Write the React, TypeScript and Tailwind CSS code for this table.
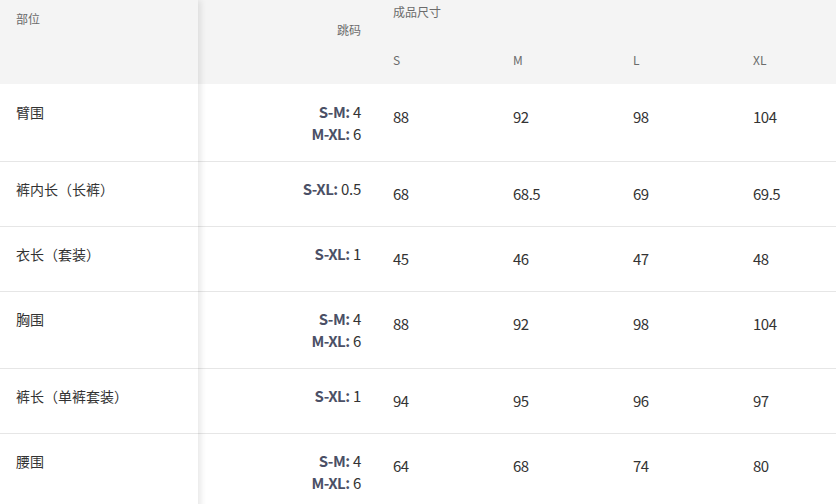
import React from "react";

type Row = { label: string; jump: [string, string][]; vals: string[] };

const rows: Row[] = [
  { label: "臂围", jump: [["S-M:", "4"], ["M-XL:", "6"]], vals: ["88", "92", "98", "104"] },
  { label: "裤内长（长裤）", jump: [["S-XL:", "0.5"]], vals: ["68", "68.5", "69", "69.5"] },
  { label: "衣长（套装）", jump: [["S-XL:", "1"]], vals: ["45", "46", "47", "48"] },
  { label: "胸围", jump: [["S-M:", "4"], ["M-XL:", "6"]], vals: ["88", "92", "98", "104"] },
  { label: "裤长（单裤套装）", jump: [["S-XL:", "1"]], vals: ["94", "95", "96", "97"] },
  { label: "腰围", jump: [["S-M:", "4"], ["M-XL:", "6"]], vals: ["64", "68", "74", "80"] },
];

const font = { fontFamily: '"Noto Sans CJK SC", "Noto Sans", sans-serif' };

function rowH(i: number, r: Row) {
  if (i === 0) return "h-[78px] pt-[17px]";
  return r.jump.length > 1 ? "h-[77px] pt-4" : "h-[65px] pt-4";
}

export default function App() {
  return (
    <div className="w-[836px] h-[504px] overflow-hidden bg-white" style={font}>
      <div className="flex w-[860px]">
        {/* sticky first column */}
        <div className="w-[198px] shrink-0 relative z-10 shadow-[3px_0_6px_rgba(0,0,0,0.09)] bg-white">
          <div className="h-[84px] bg-[#f4f4f4] pl-4 pt-[10px] text-[12px] leading-[18px] text-[#6b6b6b]">部位</div>
          {rows.map((r, i) => (
            <div
              key={i}
              className={`${rowH(i, r)} border-b border-[#e6e6e6] pl-4 text-[14px] leading-[22px] text-[#333]`}
            >
              {r.label}
            </div>
          ))}
        </div>
        <div className="flex-1">
          <div className="h-[84px] bg-[#f4f4f4] flex text-[12px] leading-[18px] text-[#6b6b6b]">
            <div className="w-[179px] shrink-0 pt-[21px] pr-4 text-right">跳码</div>
            <div className="flex-1 pt-[3px]">
              <div className="pl-4">成品尺寸</div>
              <div className="flex mt-[30px]">
                {["S", "M", "L", "XL"].map((s) => (
                  <div key={s} className="w-[120px] pl-4">{s}</div>
                ))}
              </div>
            </div>
          </div>
          {rows.map((r, i) => (
            <div key={i} className={`${rowH(i, r)} border-b border-[#e6e6e6] flex items-start`}>
              <div className="w-[179px] shrink-0 pr-4 text-right text-[15px] leading-[22px] text-[#333]">
                {r.jump.map(([k, v], j) => (
                  <div key={j}>
                    <span className="font-bold text-[#4b5066] tracking-[-0.5px]">{k}</span> <span className="tracking-[-0.3px]">{v}</span>
                  </div>
                ))}
              </div>
              {r.vals.map((v, j) => (
                <div key={j} className="w-[120px] pl-4 pt-1 text-[15px] leading-6 tracking-[-0.5px] text-[#333]">
                  {v}
                </div>
              ))}
            </div>
          ))}
        </div>
      </div>
    </div>
  );
}
